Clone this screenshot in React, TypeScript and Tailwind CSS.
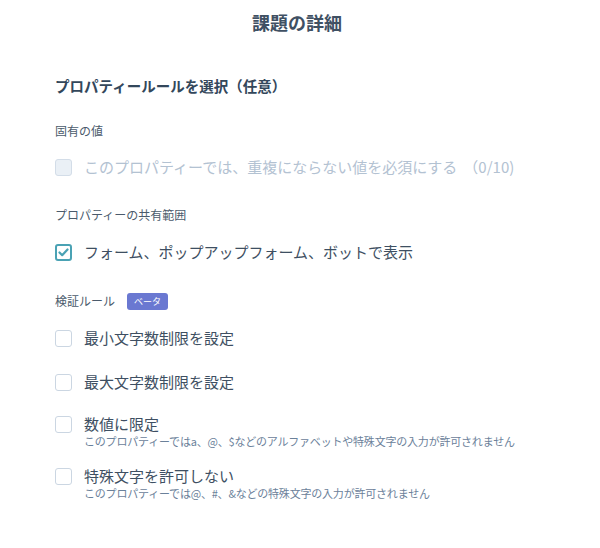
import { ReactNode } from 'react';

const font = { fontFamily: '"Noto Sans CJK JP", "Noto Sans", sans-serif' };

function Box({ checked, disabled }: { checked?: boolean; disabled?: boolean }) {
  if (checked) {
    return (
      <span className="w-[17px] h-[17px] shrink-0 rounded-[3px] border-2 border-[#4aa2b4] bg-white flex items-center justify-center">
        <svg width="11" height="9" viewBox="0 0 11 9" fill="none">
          <path d="M1.5 4.5L4.2 7.2L9.5 1.5" stroke="#4aa2b4" strokeWidth="2.2" strokeLinecap="round" strokeLinejoin="round" />
        </svg>
      </span>
    );
  }
  return (
    <span
      className={`w-[17px] h-[17px] shrink-0 rounded-[3px] border ${
        disabled ? 'border-[#d3dde8] bg-[#eaf0f6]' : 'border-[#cbd6e2] bg-white'
      }`}
    />
  );
}

function CheckRow({
  label,
  desc,
  checked,
  disabled,
  className = '',
}: {
  label: ReactNode;
  desc?: string;
  checked?: boolean;
  disabled?: boolean;
  className?: string;
}) {
  return (
    <div className={className}>
      <div className="flex items-center gap-[12px] h-[20px]">
        <Box checked={checked} disabled={disabled} />
        <span className={`text-[15px] leading-[20px] ${disabled ? 'text-[#b3c2d2]' : 'text-[#3e4f62]'}`}>{label}</span>
      </div>
      {desc && (
        <p className="ml-[29px] text-[11px] leading-[14px] text-[#6b819a] tracking-[-0.2px]">{desc}</p>
      )}
    </div>
  );
}

export default function App() {
  return (
    <div className="w-[600px] h-[548px] bg-white overflow-hidden" style={font}>
      <h1 className="pt-[10px] text-center text-[18px] leading-[24px] font-bold text-[#3f5063] pr-[6px]">
        課題の詳細
      </h1>

      <div className="px-[55px]">
        <h2 className="mt-[42px] text-[14.5px] leading-[20px] font-bold text-[#33475b]">
          プロパティールールを選択（任意）
        </h2>

        <p className="mt-[27px] text-[12px] leading-[16px] text-[#4b5b6c]">固有の値</p>
        <CheckRow
          className="mt-[18px]"
          disabled
          label={<>このプロパティーでは、重複にならない値を必須にする<span className="ml-[6px]">（0/10)</span></>}
        />

        <p className="mt-[30px] text-[12px] leading-[16px] text-[#4b5b6c]">プロパティーの共有範囲</p>
        <CheckRow className="mt-[19px]" checked label="フォーム、ポップアップフォーム、ボットで表示" />

        <div className="mt-[30px] flex items-center gap-[12px] h-[18px]">
          <span className="text-[12px] leading-[16px] text-[#4b5b6c]">検証ルール</span>
          <span className="h-[17px] px-[7px] rounded-[3px] bg-[#6a78d1] text-white text-[9px] leading-[17px]">ベータ</span>
        </div>

        <CheckRow className="mt-[18px]" label="最小文字数制限を設定" />
        <CheckRow className="mt-[24px]" label="最大文字数制限を設定" />
        <CheckRow
          className="mt-[22px]"
          label="数値に限定"
          desc="このプロパティーではa、@、$などのアルファベットや特殊文字の入力が許可されません"
        />
        <CheckRow
          className="mt-[18px]"
          label="特殊文字を許可しない"
          desc="このプロパティーでは@、#、&などの特殊文字の入力が許可されません"
        />
      </div>
    </div>
  );
}
